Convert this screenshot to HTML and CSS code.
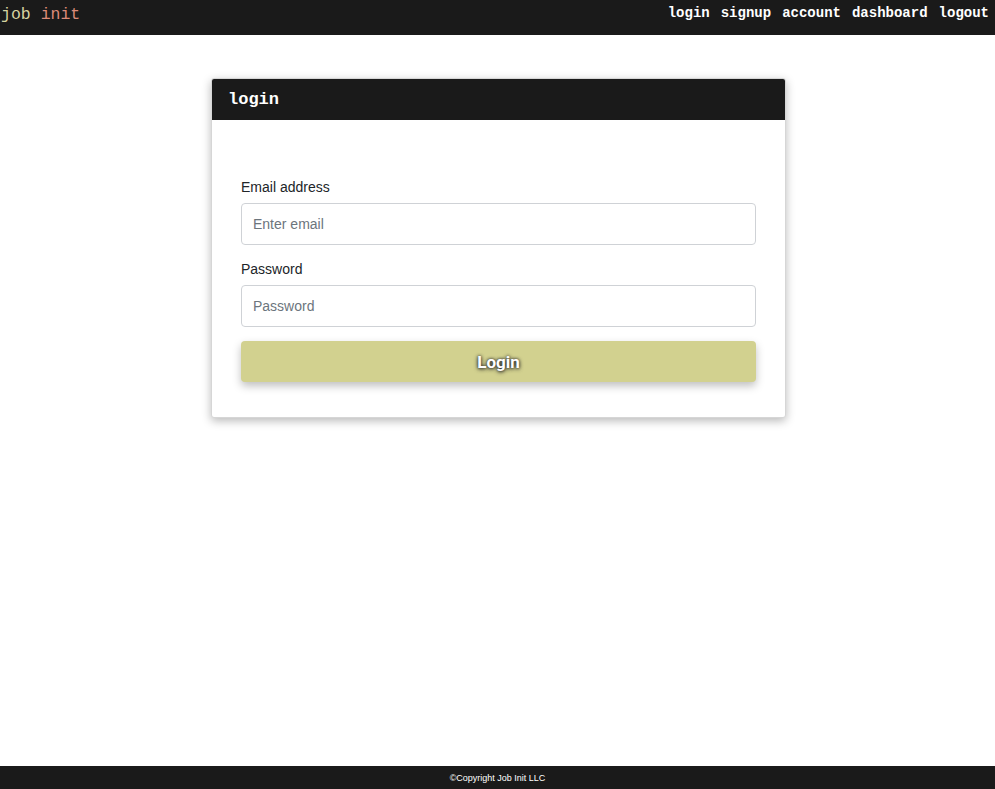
FILE: index.html
```html
<!DOCTYPE html>
<html>
<head>
<meta charset="utf-8">
<link rel="stylesheet" href="styles.css">
</head>
<body>
<nav class="topbar">
  <div class="brand"><span class="brand-job">job</span> <span class="brand-init">init</span></div>
  <ul class="nav-links">
    <li>login</li>
    <li>signup</li>
    <li>account</li>
    <li>dashboard</li>
    <li>logout</li>
  </ul>
</nav>
<main class="main">
  <section class="card">
    <header class="card-header">login</header>
    <form class="card-body">
      <div class="field">
        <label class="field-label">Email address</label>
        <input class="field-input" type="email" placeholder="Enter email">
      </div>
      <div class="field">
        <label class="field-label">Password</label>
        <input class="field-input" type="password" placeholder="Password">
      </div>
      <button class="btn-login" type="button">Login</button>
    </form>
  </section>
</main>
<footer class="footer">©Copyright Job Init LLC</footer>
</body>
</html>
```
FILE: styles.css
```css
* { box-sizing: border-box; }
html, body { height: 100%; }
body {
  margin: 0;
  background: #fff;
  font-family: "Liberation Sans", Arial, sans-serif;
  display: flex;
  flex-direction: column;
}
.topbar {
  height: 35px;
  background: #1a1a1a;
  display: flex;
  align-items: center;
  justify-content: space-between;
  padding: 0 6px 0 1px;
  flex: none;
}
.brand {
  font-family: "Liberation Mono", "Courier New", monospace;
  font-size: 16.5px;
  margin-top: -6px;
}
.brand-job { color: #d6d3a0; }
.brand-init { color: #dc8a78; }
.nav-links {
  list-style: none;
  margin: 0;
  padding: 0;
  display: flex;
  gap: 11px;
  margin-top: -10px;
}
.nav-links li {
  font-family: "Liberation Mono", "Courier New", monospace;
  font-weight: bold;
  font-size: 14px;
  color: #fff;
}
.main {
  flex: 1;
  padding-top: 43px;
}
.card {
  width: 575px;
  margin-left: 211px;
  background: #fff;
  border: 1px solid #d6d6d6;
  border-radius: 3px;
  box-shadow: 0 3px 10px rgba(0,0,0,0.28);
  overflow: hidden;
}
.card-header {
  height: 41px;
  background: #1a1a1a;
  color: #fff;
  font-family: "Liberation Mono", "Courier New", monospace;
  font-weight: bold;
  font-size: 17px;
  display: flex;
  align-items: center;
  padding-left: 16px;
}
.card-body {
  padding: 59px 29px 35px 29px;
  display: flex;
  flex-direction: column;
}
.field {
  display: flex;
  flex-direction: column;
  margin-bottom: 16px;
}
.field:last-of-type { margin-bottom: 14px; }
.field-label {
  font-size: 14px;
  color: #212529;
  margin-bottom: 8px;
}
.field-input {
  height: 42px;
  border: 1px solid #cfd2d6;
  border-radius: 4px;
  padding: 0 11px;
  font-family: "Liberation Sans", Arial, sans-serif;
  font-size: 14px;
  color: #495057;
}
.field-input::placeholder { color: #6c757d; }
.btn-login {
  height: 41px;
  border: none;
  border-radius: 4px;
  background: #d2d18f;
  color: #fff;
  font-family: Roboto, "Liberation Sans", sans-serif;
  font-weight: bold;
  font-size: 17px;
  text-shadow: 0 1px 4px #222, 0 0 3px #333;
  box-shadow: 0 4px 8px rgba(0,0,0,0.25);
}
.footer {
  flex: none;
  height: 23px;
  background: #1a1a1a;
  color: #fff;
  font-size: 9px;
  display: flex;
  align-items: center;
  justify-content: center;
}
```
